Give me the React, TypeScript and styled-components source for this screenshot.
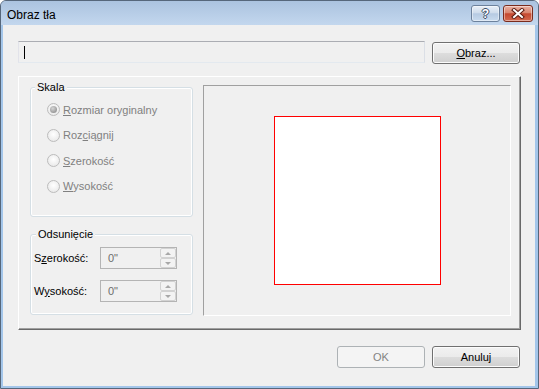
import React from "react";
import styled, { createGlobalStyle } from "styled-components";

const GlobalStyle = createGlobalStyle`
  html, body { margin: 0; padding: 0; background: #ffffff; }
  body { font-family: "Liberation Sans", Arial, sans-serif; font-size: 11px; color: #000; }
`;

const FONT = `"Liberation Sans", Arial, sans-serif`;

const Window = styled.div`
  width: 539px;
  height: 389px;
  box-sizing: border-box;
  border: 1px solid #56677b;
  border-radius: 6px 6px 0 0;
  background: #a4c6ea;
  display: flex;
  flex-direction: column;
  overflow: hidden;
`;

const TitleBar = styled.div`
  height: 24px;
  flex: none;
  display: flex;
  align-items: flex-start;
  padding: 0 5px 0 6px;
  background: linear-gradient(#abc3df, #c3d7ee);
`;

const Title = styled.div`
  flex: 1;
  font-size: 12px;
  line-height: 14px;
  margin-top: 7px;
  color: #000;
`;

const CaptionButtons = styled.div`
  display: flex;
  gap: 3px;
  margin-top: 4px;
`;

const CaptionButton = styled.div<{ $close?: boolean }>`
  width: ${(p) => (p.$close ? 30 : 29)}px;
  height: 17px;
  box-sizing: border-box;
  border: 1px solid ${(p) => (p.$close ? "#7a2c1e" : "#6c819c")};
  border-radius: 3px;
  background: ${(p) =>
    p.$close
      ? "linear-gradient(#eab0a2, #d98670 45%, #c5482f 52%, #d36a50)"
      : "linear-gradient(#e9f0f8, #cfdcec 45%, #b6cae2 52%, #c9dbef)"};
  box-shadow: inset 0 0 0 1px rgba(255, 255, 255, 0.45);
  display: flex;
  align-items: center;
  justify-content: center;
`;

const HelpGlyph = styled.span`
  font-family: ${FONT};
  font-weight: bold;
  font-size: 12px;
  line-height: 12px;
  color: #ffffff;
  text-shadow: 1px 0 0 #3b4d66, -1px 0 0 #3b4d66, 0 1px 0 #3b4d66, 0 -1px 0 #3b4d66;
`;

const Client = styled.div`
  flex: 1;
  margin: 0 3px 2px 2px;
  background: #f0f0f0;
  display: flex;
  flex-direction: column;
  padding: 16px 15px 0;
`;

const TopRow = styled.div`
  display: flex;
  align-items: flex-start;
  gap: 7px;
`;

const PathField = styled.div`
  flex: 1;
  height: 22px;
  box-sizing: border-box;
  border: 1px solid;
  border-color: #abadb3 #dbdfe6 #e3e9ef #e2e3ea;
  background: #f0f0f0;
  padding-left: 5px;
  display: flex;
  align-items: center;
`;

const Caret = styled.span`
  width: 1px;
  height: 13px;
  background: #000;
`;

const Button = styled.button<{ $top?: number }>`
  width: 88px;
  height: 22px;
  margin-top: ${(p) => p.$top ?? 0}px;
  box-sizing: border-box;
  border: 1px solid #707070;
  border-radius: 3px;
  background: linear-gradient(#f2f2f2 0%, #ebebeb 50%, #dddddd 50%, #cfcfcf 100%);
  box-shadow: inset 0 0 0 1px #fcfcfc;
  font-family: ${FONT};
  font-size: 11px;
  color: #000;
  padding: 0;

  &:disabled {
    border-color: #adb2b5;
    background: #f4f4f4;
    box-shadow: none;
    color: #838383;
  }
`;

const Mn = styled.span`
  text-decoration: underline;
  text-underline-offset: 1px;
`;

const Panel = styled.div`
  margin-top: 12px;
  margin-right: -1px;
  height: 254px;
  box-sizing: border-box;
  border: 1px solid;
  border-color: #ffffff #696969 #696969 #ffffff;
  box-shadow: inset -1px -1px 0 #a0a0a0;
  display: flex;
  align-items: flex-start;
  gap: 10px;
  padding: 0 8px 0 11px;
`;

const LeftColumn = styled.div`
  margin-top: 10px;
  width: 163px;
  display: flex;
  flex-direction: column;
  gap: 17px;
`;

const GroupBox = styled.div<{ $height: number }>`
  position: relative;
  height: ${(p) => p.$height}px;
  box-sizing: border-box;
  border: 1px solid #d5dfe5;
  border-radius: 3px;
  box-shadow: inset 0 0 0 1px #ffffff;
`;

const Legend = styled.span<{ $left: number }>`
  position: absolute;
  top: -7px;
  left: ${(p) => p.$left}px;
  padding: 0 2px;
  background: #f0f0f0;
  line-height: 13px;
  color: #000;
`;

const RadioList = styled.div`
  padding: 9px 0 0 16px;
  display: flex;
  flex-direction: column;
`;

const RadioRow = styled.div`
  height: 25.5px;
  display: flex;
  align-items: center;
  gap: 3px;
  color: #808080;
`;

const RadioCircle = styled.span<{ $checked?: boolean }>`
  width: 13px;
  height: 13px;
  box-sizing: border-box;
  border-radius: 50%;
  border: 1px solid #bcbcbc;
  background: radial-gradient(circle at 50% 40%, #ffffff, #e4e4e4);
  display: flex;
  align-items: center;
  justify-content: center;

  &::after {
    content: "";
    display: ${(p) => (p.$checked ? "block" : "none")};
    width: 7px;
    height: 7px;
    border-radius: 50%;
    background: radial-gradient(circle at 40% 35%, #d6d6d6, #9a9a9a 70%);
  }
`;

const FieldList = styled.div`
  padding: 12px 0 0 3px;
  display: flex;
  flex-direction: column;
  gap: 11px;
`;

const FieldRow = styled.div`
  height: 22px;
  display: flex;
  align-items: center;
`;

const FieldLabel = styled.span`
  width: 66px;
  color: #000;
`;

const SpinBox = styled.div`
  width: 77px;
  height: 22px;
  box-sizing: border-box;
  border: 1px solid #b4b4b4;
  background: #f0f0f0;
  display: flex;
`;

const SpinValue = styled.span`
  flex: 1;
  padding-left: 7px;
  line-height: 20px;
  color: #6d6d6d;
`;

const SpinButtons = styled.div`
  width: 16px;
  display: flex;
  flex-direction: column;
`;

const SpinButton = styled.span<{ $down?: boolean }>`
  height: 10px;
  box-sizing: border-box;
  border: 1px solid #d2d2d2;
  border-radius: 2px;
  background: #f3f3f3;
  display: flex;
  align-items: center;
  justify-content: center;

  &::after {
    content: "";
    width: 0;
    height: 0;
    border-left: 3px solid transparent;
    border-right: 3px solid transparent;
    ${(p) =>
      p.$down ? "border-top: 3px solid #a8a8a8;" : "border-bottom: 3px solid #a8a8a8;"}
  }
`;

const Preview = styled.div`
  margin-top: 8px;
  width: 308px;
  height: 231px;
  box-sizing: border-box;
  border: 1px solid;
  border-color: #a0a0a0 #ffffff #ffffff #a0a0a0;
  display: flex;
  align-items: center;
  justify-content: center;
`;

const PageRect = styled.div`
  width: 167px;
  height: 169px;
  box-sizing: border-box;
  border: 1px solid #ff0000;
  background: #ffffff;
`;

const Footer = styled.div`
  margin-top: 16px;
  display: flex;
  justify-content: flex-end;
  gap: 7px;
`;

const radios: { pre: string; mn: string; post: string; checked?: boolean }[] = [
  { pre: "", mn: "R", post: "ozmiar oryginalny", checked: true },
  { pre: "Roz", mn: "c", post: "iągnij" },
  { pre: "", mn: "S", post: "zerokość" },
  { pre: "", mn: "W", post: "ysokość" },
];

const fields = [
  { pre: "S", mn: "z", post: "erokość:" },
  { pre: "W", mn: "y", post: "sokość:" },
];

export default function App() {
  return (
    <>
      <GlobalStyle />
      <Window>
        <TitleBar>
          <Title>Obraz tła</Title>
          <CaptionButtons>
            <CaptionButton>
              <HelpGlyph>?</HelpGlyph>
            </CaptionButton>
            <CaptionButton $close>
              <svg width="14" height="11" viewBox="0 0 14 11">
                <path d="M3 2 L11 9 M11 2 L3 9" stroke="#5a1c12" strokeWidth="4" strokeLinecap="square" />
                <path d="M3 2 L11 9 M11 2 L3 9" stroke="#ffffff" strokeWidth="2" strokeLinecap="square" />
              </svg>
            </CaptionButton>
          </CaptionButtons>
        </TitleBar>
        <Client>
          <TopRow>
            <PathField>
              <Caret />
            </PathField>
            <Button $top={1}>
              <Mn>O</Mn>braz...
            </Button>
          </TopRow>
          <Panel>
            <LeftColumn>
              <GroupBox $height={130}>
                <Legend $left={4}>Skala</Legend>
                <RadioList>
                  {radios.map((r, i) => (
                    <RadioRow key={i}>
                      <RadioCircle $checked={r.checked} />
                      <span>
                        {r.pre}
                        <Mn>{r.mn}</Mn>
                        {r.post}
                      </span>
                    </RadioRow>
                  ))}
                </RadioList>
              </GroupBox>
              <GroupBox $height={81}>
                <Legend $left={5}>Odsunięcie</Legend>
                <FieldList>
                  {fields.map((f, i) => (
                    <FieldRow key={i}>
                      <FieldLabel>
                        {f.pre}
                        <Mn>{f.mn}</Mn>
                        {f.post}
                      </FieldLabel>
                      <SpinBox>
                        <SpinValue>0"</SpinValue>
                        <SpinButtons>
                          <SpinButton />
                          <SpinButton $down />
                        </SpinButtons>
                      </SpinBox>
                    </FieldRow>
                  ))}
                </FieldList>
              </GroupBox>
            </LeftColumn>
            <Preview>
              <PageRect />
            </Preview>
          </Panel>
          <Footer>
            <Button disabled>OK</Button>
            <Button>Anuluj</Button>
          </Footer>
        </Client>
      </Window>
    </>
  );
}
